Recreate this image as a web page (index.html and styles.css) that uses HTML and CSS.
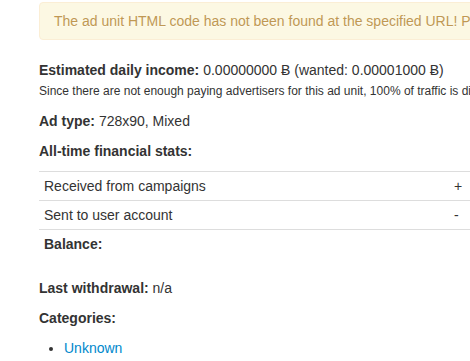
FILE: index.html
```html
<!DOCTYPE html>
<html lang="en">
<head>
    <meta charset="UTF-8">
    <title>Ad unit</title>
    <link rel="stylesheet" href="styles.css">
</head>
<body>
    <div class="content">
        <div class="alert">The ad unit HTML code has not been found at the specified URL! Please check that the code is installed.</div>

        <p>
            <b>Estimated daily income:</b> 0.00000000 Ƀ (wanted: 0.00001000 Ƀ)<br>
            <small>Since there are not enough paying advertisers for this ad unit, 100% of traffic is directed to backup ads.</small>
        </p>

        <p><b>Ad type:</b> 728x90, Mixed</p>

        <p><b>All-time financial stats:</b></p>

        <table class="stats">
            <tr>
                <td class="label">Received from campaigns</td>
                <td>+</td>
            </tr>
            <tr>
                <td class="label">Sent to user account</td>
                <td>-</td>
            </tr>
            <tr>
                <td class="label"><b>Balance:</b></td>
                <td></td>
            </tr>
        </table>

        <p><b>Last withdrawal:</b> n/a</p>

        <p><b>Categories:</b></p>

        <ul>
            <li><a href="#">Unknown</a></li>
        </ul>
    </div>
</body>
</html>
```

FILE: styles.css
```css
html {
    overflow: hidden;
}

body {
    font-family: "Liberation Sans", Arial, sans-serif;
    font-size: 14px;
    line-height: 20px;
    color: #333;
    background-color: #fff;
    margin: 0;
    padding: 2px 0 0 39px;
}

.content {
    width: 900px;
    white-space: nowrap;
}

p {
    margin: 0 0 10px;
}

small {
    font-size: 12px;
}

a {
    color: #0088cc;
    text-decoration: none;
}

.alert {
    padding: 8px 35px 8px 14px;
    margin-bottom: 20px;
    color: #c09853;
    background-color: #fcf8e3;
    border: 1px solid #fbeed5;
    border-radius: 4px;
    text-shadow: 0 1px 0 rgba(255, 255, 255, 0.5);
}

.stats {
    border-collapse: collapse;
    border-spacing: 0;
    margin-bottom: 20px;
}

.stats td {
    padding: 4px 5px;
    border-top: 1px solid #ddd;
    text-align: left;
    vertical-align: top;
}

.stats .label {
    width: 400px;
}

.stats td:last-child {
    width: 200px;
}

ul {
    margin: 0 0 10px 25px;
    padding: 0;
}
```
